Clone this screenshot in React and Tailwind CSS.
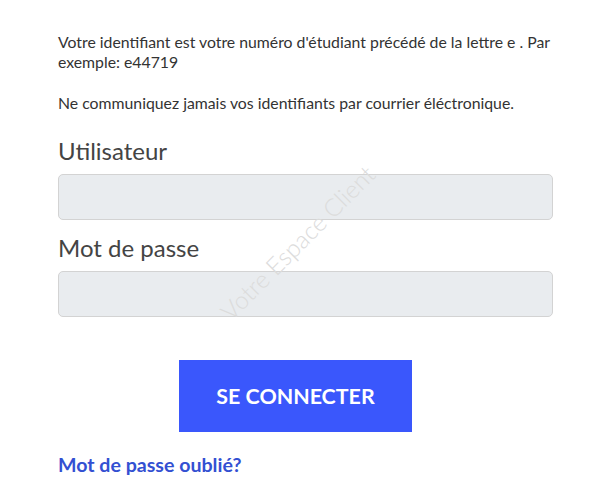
import React from 'react';

const FONT = { fontFamily: '"Source Sans Pro", Lato, "Noto Sans", sans-serif' };

function Field({ label, type }) {
  return (
    <div>
      <label className="block text-[24px] leading-[29px] text-[#444]">{label}</label>
      <input
        type={type}
        className="mt-[9px] block w-full h-[46px] rounded-[5px] border border-[#d3d3d3] bg-[#e9ecef] px-3 outline-none"
      />
    </div>
  );
}

export default function App() {
  return (
    <div className="relative w-[600px] h-[493px] bg-white overflow-hidden" style={FONT}>
      <div className="ml-[58px] w-[495px] pt-[32px]">
        <p className="text-[15.8px] leading-[20px] text-[#333]">
          Votre identifiant est votre numéro d'étudiant précédé de la lettre e . Par exemple: e44719
        </p>
        <p className="mt-[21px] text-[15.8px] leading-[20px] text-[#333]">
          Ne communiquez jamais vos identifiants par courrier éléctronique.
        </p>

        <div className="mt-[23px] flex flex-col gap-[13px]">
          <Field label="Utilisateur" type="text" />
          <Field label="Mot de passe" type="password" />
        </div>

        <button className="mt-[43px] ml-[121px] block w-[233px] h-[72px] bg-[#3a57fc] text-white text-[21.4px] font-bold">
          SE CONNECTER
        </button>

        <a href="#" className="mt-[21px] block text-[19.6px] leading-[24px] font-bold text-[#3350d2]">
          Mot de passe oublié?
        </a>
      </div>

      {/* watermark */}
      <div className="pointer-events-none absolute left-[298px] top-[243px] -translate-x-1/2 -translate-y-1/2 -rotate-45 whitespace-nowrap text-[24.5px] font-light text-[#dcdcdc]">
        Votre Espace Client
      </div>
    </div>
  );
}
